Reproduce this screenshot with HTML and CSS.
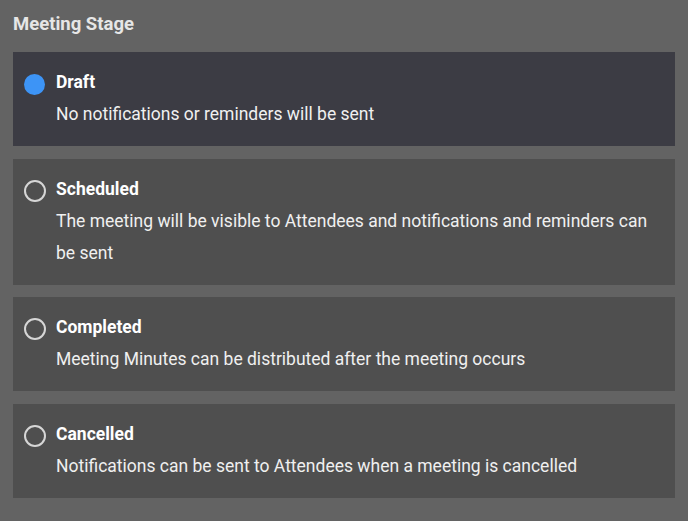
FILE: index.html
```html
<!DOCTYPE html>
<html>
<head>
<meta charset="utf-8">
<link rel="stylesheet" href="styles.css">
</head>
<body>
<div class="page">
  <h2 class="heading">Meeting Stage</h2>
  <div class="options">
    <label class="option selected">
      <span class="radio checked"></span>
      <span class="text">
        <span class="title">Draft</span>
        <span class="desc">No notifications or reminders will be sent</span>
      </span>
    </label>
    <label class="option">
      <span class="radio"></span>
      <span class="text">
        <span class="title">Scheduled</span>
        <span class="desc">The meeting will be visible to Attendees and notifications and reminders can be sent</span>
      </span>
    </label>
    <label class="option">
      <span class="radio"></span>
      <span class="text">
        <span class="title">Completed</span>
        <span class="desc">Meeting Minutes can be distributed after the meeting occurs</span>
      </span>
    </label>
    <label class="option">
      <span class="radio"></span>
      <span class="text">
        <span class="title">Cancelled</span>
        <span class="desc">Notifications can be sent to Attendees when a meeting is cancelled</span>
      </span>
    </label>
  </div>
</div>
</body>
</html>
```

FILE: styles.css
```css
html, body {
  margin: 0;
  padding: 0;
  background: #636363;
}
body {
  font-family: Roboto, "Liberation Sans", sans-serif;
  color: #f2f2f2;
}
.page {
  padding: 12px 13px 22px 13px;
}
.heading {
  margin: 0 0 15px 0;
  font-size: 18.5px;
  font-weight: 700;
  line-height: 25px;
  color: #e6e6e6;
}
.options {
  display: flex;
  flex-direction: column;
  gap: 12.5px;
}
.option {
  display: flex;
  align-items: flex-start;
  background: #4f4f4f;
  padding: 14px 16px 16px 11px;
}
.option.selected {
  background: #3c3c44;
}
.radio {
  flex: none;
  box-sizing: border-box;
  width: 22px;
  height: 22px;
  border-radius: 50%;
  border: 2px solid #d6d6d6;
  margin-top: 7px;
  margin-right: 10px;
}
.radio.checked {
  border: none;
  width: 21px;
  height: 21px;
  margin-top: 7.5px;
  margin-right: 11px;
  background: #3d94f6;
}
.text {
  display: flex;
  flex-direction: column;
}
.title {
  font-size: 17.5px;
  font-weight: 700;
  line-height: 32px;
  color: #ffffff;
}
.desc {
  font-size: 17.5px;
  line-height: 32px;
  color: #f0f0f0;
}
```
